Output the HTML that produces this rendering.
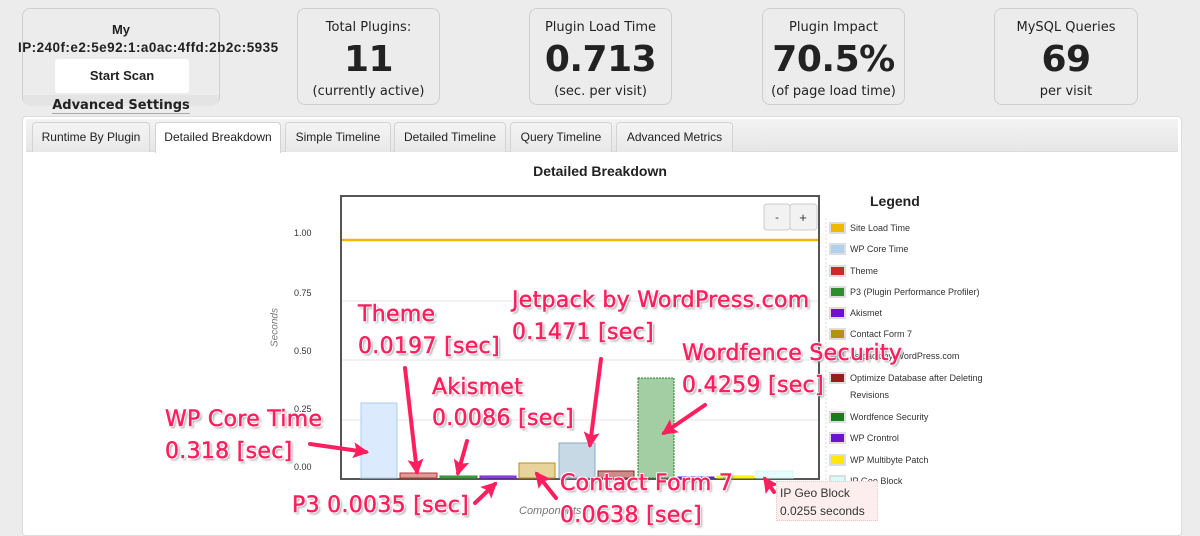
<!DOCTYPE html>
<html><head><meta charset="utf-8"><style>
*{margin:0;padding:0;box-sizing:border-box}
body{width:1200px;height:532px;background:#ececec;font-family:"Liberation Sans",sans-serif;position:relative;overflow:hidden;color:#222}
.box{position:absolute;top:8px;height:97px;border:1px solid #cfcfcf;border-radius:8px;background:#ececec;text-align:center;font-family:"DejaVu Sans","Liberation Sans",sans-serif}
.box .t{font-size:13px;margin-top:11px;color:#222}
.box .n{font-size:36px;font-weight:bold;line-height:52px;color:#222;letter-spacing:-0.5px;margin-top:-1px}
.box .s{font-size:13px;color:#222;margin-top:-2px}
.panel{position:absolute;left:22px;top:116px;width:1160px;height:420px;background:#fff;border:1px solid #ddd;border-radius:4px}
.tabbar{position:absolute;left:26px;top:119px;width:1152px;height:33px;background:linear-gradient(#f3f3f3,#e6e6e6);border-bottom:1px solid #ddd}
.tab{position:absolute;top:122px;height:30px;border:1px solid #d3d3d3;border-bottom:none;border-radius:4px 4px 0 0;background:linear-gradient(#f4f4f4,#e8e8e8);font-size:12px;text-align:center;line-height:28px;color:#222}
.tab.a{background:#fff;height:31px}
.a1{position:absolute;color:#ff1f5e;font-family:"DejaVu Sans","Liberation Sans",sans-serif;font-size:22px;letter-spacing:0.3px;white-space:nowrap;-webkit-text-stroke:0.5px #ff1f5e;text-shadow:0 0 2px #fff,1px 1px 0 #fff,-1px -1px 0 #fff,1px -1px 0 #fff,-1px 1px 0 #fff,2px 2px 2px #999}
.yl{position:absolute;font-size:9px;color:#333;left:294px}
.lg{position:absolute;left:829px;font-size:9px;color:#333}
.lg i{position:absolute;left:0;top:-1px;width:17px;height:12px;border:2px solid #ddd}
.lg span{position:absolute;left:21px;white-space:nowrap}
</style></head><body>
<div class="box" style="left:22px;width:198px;height:97px">
<div style="position:absolute;left:0;right:0;top:12px;font-family:'Liberation Sans';font-size:13px;font-weight:bold;line-height:18px;text-align:center">My</div>
<div style="position:absolute;left:-5px;top:30px;width:260px;font-family:'Liberation Sans';font-size:13.5px;letter-spacing:0.45px;font-weight:bold;line-height:18px;text-align:center;white-space:nowrap;">IP:240f:e2:5e92:1:a0ac:4ffd:2b2c:5935</div>
<div style="position:absolute;left:32px;top:50px;width:134px;height:34px;background:#fff;border-radius:3px;font-family:'Liberation Sans';font-weight:bold;font-size:13px;line-height:34px">Start Scan</div>
<div style="position:absolute;left:0;right:0;top:86px;height:11px;background:#e4e4e4;border-radius:0 0 8px 8px"></div>
<div style="position:absolute;left:0;right:0;top:89px;font-size:13px;font-weight:bold;"><span style="border-bottom:1px solid #aaa">Advanced Settings</span></div>
</div>
<div class="box" style="left:297px;width:143px"><div class="t">Total Plugins:</div><div class="n">11</div><div class="s">(currently active)</div></div>
<div class="box" style="left:529px;width:143px"><div class="t">Plugin Load Time</div><div class="n">0.713</div><div class="s">(sec. per visit)</div></div>
<div class="box" style="left:762px;width:143px"><div class="t">Plugin Impact</div><div class="n">70.5%</div><div class="s">(of page load time)</div></div>
<div class="box" style="left:994px;width:144px"><div class="t">MySQL Queries</div><div class="n">69</div><div class="s">per visit</div></div>

<div class="panel"></div>
<div class="tabbar"></div>
<div class="tab" style="left:32px;width:118px">Runtime By Plugin</div>
<div class="tab a" style="left:155px;width:126px">Detailed Breakdown</div>
<div class="tab" style="left:285px;width:106px">Simple Timeline</div>
<div class="tab" style="left:394px;width:112px">Detailed Timeline</div>
<div class="tab" style="left:510px;width:102px">Query Timeline</div>
<div class="tab" style="left:616px;width:117px">Advanced Metrics</div>

<div style="position:absolute;left:0;width:1200px;top:163px;text-align:center;font-weight:bold;font-size:14px">Detailed Breakdown</div>

<div class="yl" style="top:228px">1.00</div>
<div class="yl" style="top:288px">0.75</div>
<div class="yl" style="top:346px">0.50</div>
<div class="yl" style="top:404px">0.25</div>
<div class="yl" style="top:462px">0.00</div>
<div style="position:absolute;left:250px;top:322px;font-size:10px;color:#777;font-style:italic;transform:rotate(-90deg);width:50px;text-align:center">Seconds</div>
<div style="position:absolute;left:519px;top:505px;font-size:11px;color:#777;font-style:italic">Components</div>

<svg style="position:absolute;left:0;top:0" width="1200" height="532">
<rect x="341" y="196" width="478" height="283" fill="#fff" stroke="#555" stroke-width="2"/>
<g stroke="#e6e6e6"><line x1="342" x2="818" y1="301" y2="301"/><line x1="342" x2="818" y1="360" y2="360"/><line x1="342" x2="818" y1="420" y2="420"/></g>
<line x1="342" x2="818" y1="240" y2="240" stroke="#f0b800" stroke-width="2.5"/>
<rect x="361" y="403" width="36" height="75" fill="#dbeafc" stroke="#a9cdf2"/>
<rect x="400" y="473" width="37" height="5" fill="#e09a9a" stroke="#c03030"/>
<rect x="440" y="476" width="37" height="2" fill="#5a5" stroke="#282"/>
<rect x="480" y="476" width="36" height="2" fill="#a070e0" stroke="#7010d0"/>
<rect x="519" y="463" width="36" height="15" fill="#e8d49a" stroke="#b89020"/>
<rect x="559" y="443" width="36" height="35" fill="#c8d9e6" stroke="#8aa8c8"/>
<rect x="598" y="471" width="36" height="7" fill="#d08888" stroke="#902020"/>
<rect x="638" y="378" width="36" height="100" fill="#a3cea3" stroke="#2a7a2a" stroke-dasharray="2 1"/>
<rect x="678" y="477" width="36" height="1" fill="#8040d0" stroke="#6020c0"/>
<rect x="717" y="476" width="37" height="2" fill="#ff0" stroke="#ee0"/>
<rect x="756" y="471" width="37" height="7" fill="#e8fdfd" stroke="#d0f4f4"/>
<rect x="764" y="204" width="26" height="26" rx="3" fill="#f2f2f2" stroke="#ccc"/>
<rect x="790" y="204" width="27" height="26" rx="3" fill="#f2f2f2" stroke="#ccc"/>
<text x="777" y="221" font-size="11" text-anchor="middle" fill="#333" font-family="Liberation Sans">-</text>
<text x="803" y="222" font-size="13" text-anchor="middle" fill="#333" font-family="Liberation Sans">+</text>
<line x1="826" y1="218" x2="826" y2="490" stroke="#ddd" stroke-dasharray="2 2"/>
<defs><marker id="h" viewBox="0 0 10 10" refX="8" refY="5" markerWidth="4" markerHeight="4" orient="auto"><path d="M0 0L10 5L0 10L2 5z" fill="#ff1f5e"/></marker></defs>
<g stroke="#ff1f5e" stroke-width="4" fill="none" marker-end="url(#h)" stroke-linecap="round">
<line x1="310" y1="444" x2="366" y2="452"/>
<line x1="405" y1="368" x2="417" y2="472"/>
<line x1="467" y1="441" x2="458" y2="473"/>
<line x1="601" y1="359" x2="590" y2="445"/>
<line x1="705" y1="405" x2="664" y2="433"/>
<line x1="475" y1="503" x2="495" y2="484"/>
<line x1="556" y1="498" x2="537" y2="474"/>
<line x1="774" y1="492" x2="765" y2="479"/>
</g>
</svg>

<div style="position:absolute;left:870px;top:193px;font-weight:bold;font-size:14px">Legend</div>
<div class="lg" style="top:223px"><i style="background:#f0b800"></i><span>Site Load Time</span></div>
<div class="lg" style="top:244px"><i style="background:#b0d0ee"></i><span>WP Core Time</span></div>
<div class="lg" style="top:266px"><i style="background:#cc2a2a"></i><span>Theme</span></div>
<div class="lg" style="top:287px"><i style="background:#2c8f2c"></i><span>P3 (Plugin Performance Profiler)</span></div>
<div class="lg" style="top:308px"><i style="background:#7010d0"></i><span>Akismet</span></div>
<div class="lg" style="top:329px"><i style="background:#b89010"></i><span>Contact Form 7</span></div>
<div class="lg" style="top:351px"><i style="background:#8aa8c8"></i><span>Jetpack by WordPress.com</span></div>
<div class="lg" style="top:373px"><i style="background:#9a1c1c"></i><span>Optimize Database after Deleting</span></div>
<div class="lg" style="top:390px"><span>Revisions</span></div>
<div class="lg" style="top:412px"><i style="background:#1f7a1f"></i><span>Wordfence Security</span></div>
<div class="lg" style="top:433px"><i style="background:#7010d0"></i><span>WP Crontrol</span></div>
<div class="lg" style="top:455px"><i style="background:#ffe80a"></i><span>WP Multibyte Patch</span></div>
<div class="lg" style="top:476px"><i style="background:#d8fcfc"></i><span>IP Geo Block</span></div>

<div style="position:absolute;left:776px;top:481px;width:102px;height:40px;background:#fdeeee;border:1px dotted #f3c6c6;font-size:12px;line-height:18px;padding:2px 3px;color:#333;font-family:'Liberation Sans',sans-serif;white-space:nowrap">IP Geo Block<br>0.0255 seconds</div>

<div class="a1" style="left:165px;top:407px">WP Core Time</div>
<div class="a1" style="left:165px;top:439px">0.318 [sec]</div>
<div class="a1" style="left:358px;top:302px">Theme</div>
<div class="a1" style="left:358px;top:334px">0.0197 [sec]</div>
<div class="a1" style="left:432px;top:375px">Akismet</div>
<div class="a1" style="left:432px;top:406px">0.0086 [sec]</div>
<div class="a1" style="left:512px;top:288px">Jetpack by WordPress.com</div>
<div class="a1" style="left:512px;top:320px">0.1471 [sec]</div>
<div class="a1" style="left:682px;top:341px">Wordfence Security</div>
<div class="a1" style="left:682px;top:373px">0.4259 [sec]</div>
<div class="a1" style="left:292px;top:493px">P3 0.0035 [sec]</div>
<div class="a1" style="left:560px;top:471px">Contact Form 7</div>
<div class="a1" style="left:560px;top:503px">0.0638 [sec]</div>
</body></html>
